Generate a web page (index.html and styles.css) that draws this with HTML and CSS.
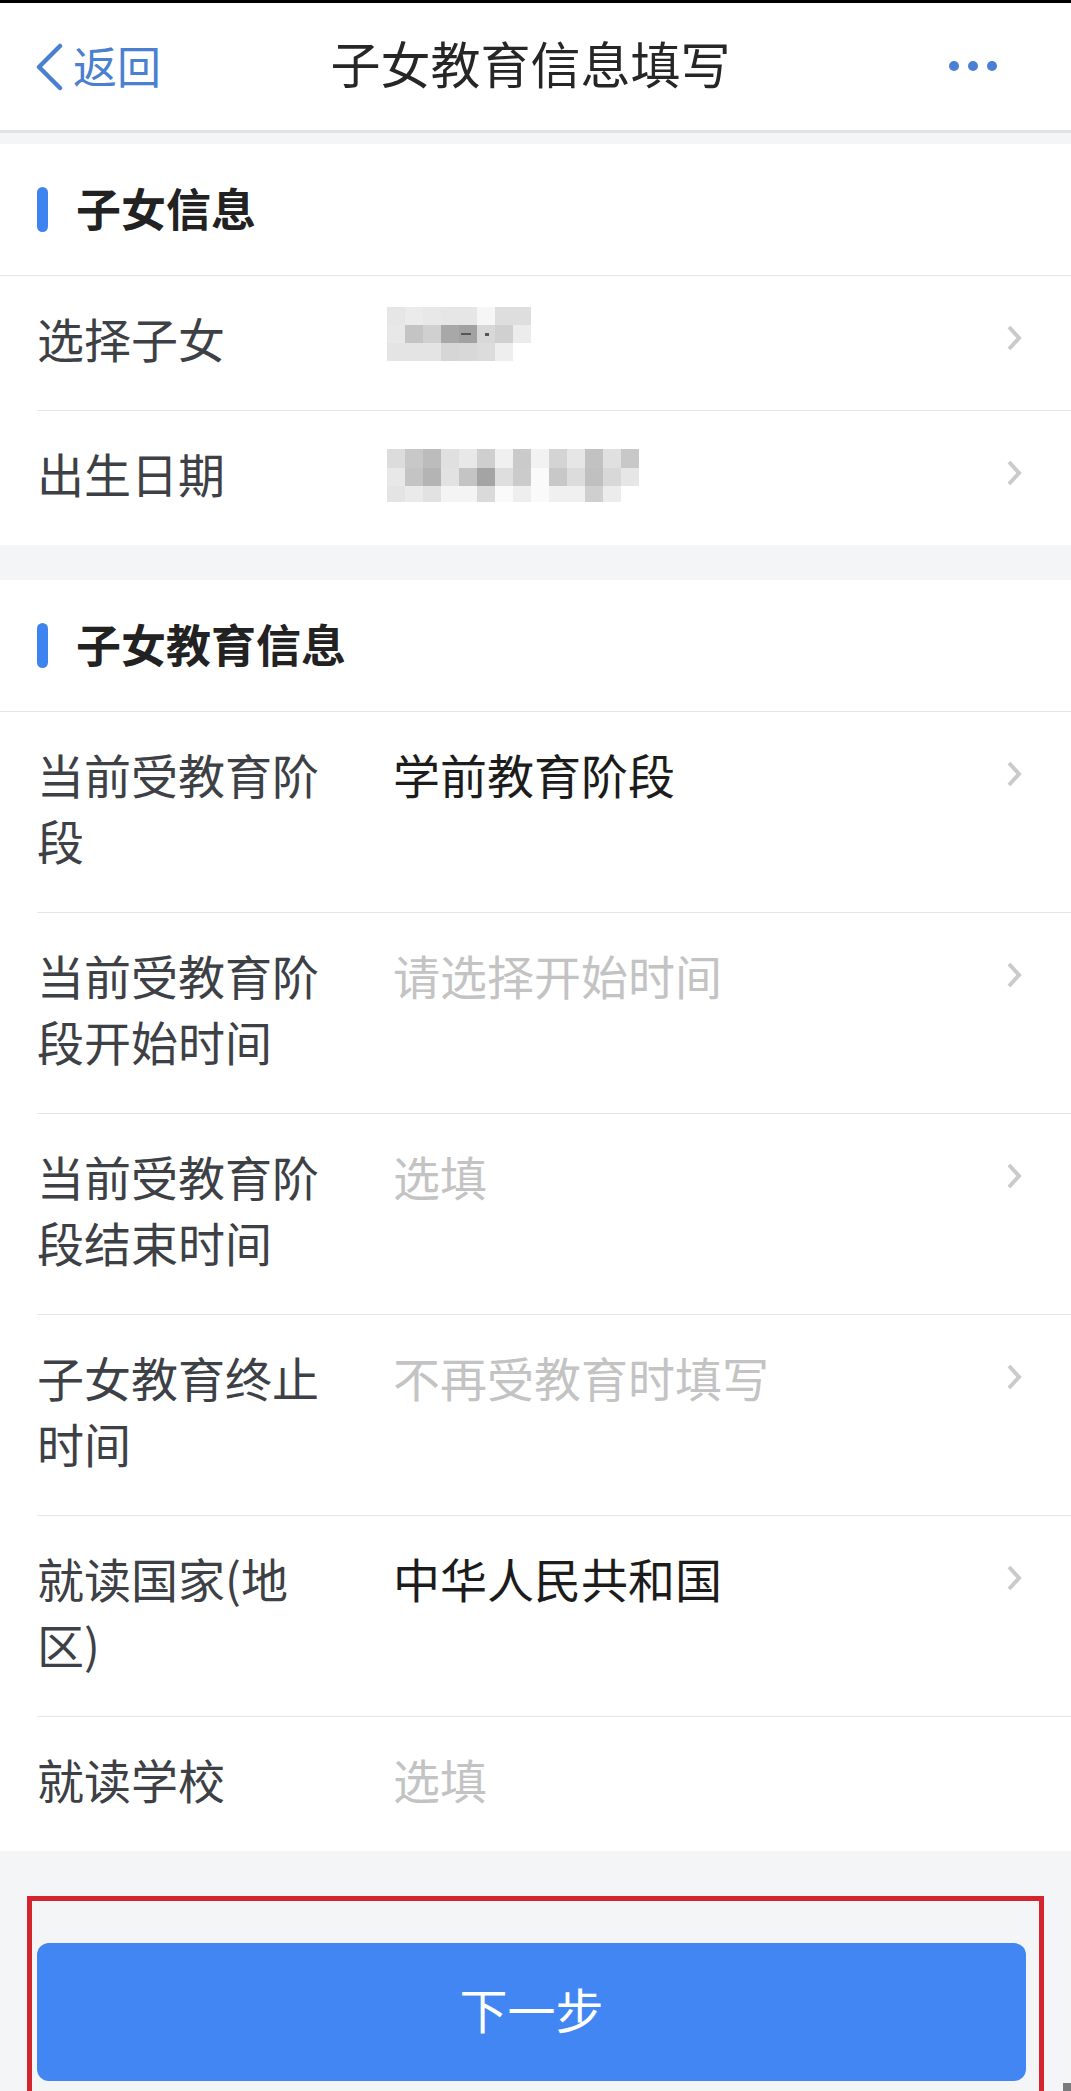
FILE: index.html
```html
<!DOCTYPE html>
<html lang="zh-CN">
<head>
<meta charset="utf-8">
<title>子女教育信息填写</title>
<link rel="stylesheet" href="styles.css">
</head>
<body>
<div class="page">
  <div class="status"></div>
  <header class="nav">
    <div class="back">
      <svg class="back-icon" width="30" height="48" viewBox="0 0 30 48"><polyline points="26,3 5,24 26,45" fill="none" stroke="#4a80cf" stroke-width="4.5" stroke-linecap="round" stroke-linejoin="round"/></svg>
      <span>返回</span>
    </div>
    <div class="title">子女教育信息填写</div>
    <div class="more"><span class="dot"></span><span class="dot"></span><span class="dot"></span></div>
  </header>

  <section class="card">
    <div class="card-head"><span class="mark"></span><span class="head-text">子女信息</span></div>
    <div class="row">
      <div class="label">选择子女</div>
      <div class="value">
        <svg class="mosaic" width="150" height="66" viewBox="0 0 150 66">
          <g transform="translate(0,2)">
          <rect x="0" y="0" width="18" height="18" fill="#e6e6e6"/><rect x="18" y="0" width="18" height="18" fill="#ebebeb"/><rect x="36" y="0" width="18" height="18" fill="#e8e8e8"/><rect x="54" y="0" width="36" height="18" fill="#e6e6e6"/><rect x="90" y="0" width="18" height="18" fill="#f6f6f6"/><rect x="108" y="0" width="36" height="18" fill="#dedede"/>
          <rect x="0" y="18" width="18" height="18" fill="#e8e8e8"/><rect x="18" y="18" width="18" height="18" fill="#c4c4c4"/><rect x="36" y="18" width="18" height="18" fill="#d0d0d0"/><rect x="54" y="18" width="18" height="18" fill="#a8a8a8"/><rect x="72" y="18" width="18" height="18" fill="#a2a2a2"/><rect x="90" y="18" width="18" height="18" fill="#d8d8d8"/><rect x="108" y="18" width="18" height="18" fill="#d0d0d0"/><rect x="126" y="18" width="18" height="18" fill="#ececec"/>
          <rect x="0" y="36" width="54" height="18" fill="#e4e4e4"/><rect x="54" y="36" width="18" height="18" fill="#d6d6d6"/><rect x="72" y="36" width="18" height="18" fill="#d8d8d8"/><rect x="90" y="36" width="18" height="18" fill="#dcdcdc"/><rect x="108" y="36" width="18" height="18" fill="#eeeeee"/>
          <rect x="74" y="26" width="10" height="2" fill="#555"/><rect x="98" y="26" width="4" height="3" fill="#555"/>
          </g>
        </svg>
      </div>
      <div class="arrow"><svg width="18" height="28" viewBox="0 0 18 28"><polyline points="4,3 14,14 4,25" fill="none" stroke="#cacaca" stroke-width="4"/></svg></div>
    </div>
    <div class="row">
      <div class="label">出生日期</div>
      <div class="value">
        <svg class="mosaic" width="260" height="66" viewBox="0 0 260 66">
          <g transform="translate(0,9)">
          <rect x="0" y="0" width="18" height="19" fill="#dcdcdc"/><rect x="18" y="0" width="18" height="19" fill="#c8c8c8"/><rect x="36" y="0" width="18" height="19" fill="#bcbcbc"/><rect x="54" y="0" width="18" height="19" fill="#e0e0e0"/><rect x="72" y="0" width="18" height="19" fill="#e8e8e8"/><rect x="90" y="0" width="18" height="19" fill="#cfcfcf"/><rect x="108" y="0" width="18" height="19" fill="#f0f0f0"/><rect x="126" y="0" width="18" height="19" fill="#cacaca"/><rect x="144" y="0" width="18" height="19" fill="#f2f2f2"/><rect x="162" y="0" width="18" height="19" fill="#d4d4d4"/><rect x="180" y="0" width="18" height="19" fill="#e6e6e6"/><rect x="198" y="0" width="18" height="19" fill="#c2c2c2"/><rect x="216" y="0" width="18" height="19" fill="#e0e0e0"/><rect x="234" y="0" width="18" height="19" fill="#c8c8c8"/>
          <rect x="0" y="19" width="18" height="18" fill="#e8e8e8"/><rect x="18" y="19" width="18" height="18" fill="#c4c4c4"/><rect x="36" y="19" width="18" height="18" fill="#b4b4b4"/><rect x="54" y="19" width="18" height="18" fill="#e2e2e2"/><rect x="72" y="19" width="18" height="18" fill="#c4c4c4"/><rect x="90" y="19" width="18" height="18" fill="#a4a4a4"/><rect x="108" y="19" width="18" height="18" fill="#dedede"/><rect x="126" y="19" width="18" height="18" fill="#cbcbcb"/><rect x="144" y="19" width="18" height="18" fill="#fafafa"/><rect x="162" y="19" width="18" height="18" fill="#c8c8c8"/><rect x="180" y="19" width="18" height="18" fill="#dcdcdc"/><rect x="198" y="19" width="18" height="18" fill="#c0c0c0"/><rect x="216" y="19" width="18" height="18" fill="#d8d8d8"/><rect x="234" y="19" width="18" height="18" fill="#e6e6e6"/>
          <rect x="0" y="37" width="18" height="16" fill="#e4e4e4"/><rect x="18" y="37" width="18" height="16" fill="#eaeaea"/><rect x="36" y="37" width="18" height="16" fill="#e2e2e2"/><rect x="54" y="37" width="36" height="16" fill="#f4f4f4"/><rect x="90" y="37" width="18" height="16" fill="#dadada"/><rect x="108" y="37" width="18" height="16" fill="#fafafa"/><rect x="126" y="37" width="18" height="16" fill="#eeeeee"/><rect x="144" y="37" width="18" height="16" fill="#fafafa"/><rect x="162" y="37" width="36" height="16" fill="#f0f0f0"/><rect x="198" y="37" width="18" height="16" fill="#cfcfcf"/><rect x="216" y="37" width="18" height="16" fill="#ececec"/>
          </g>
        </svg>
      </div>
      <div class="arrow"><svg width="18" height="28" viewBox="0 0 18 28"><polyline points="4,3 14,14 4,25" fill="none" stroke="#cacaca" stroke-width="4"/></svg></div>
    </div>
  </section>

  <section class="card">
    <div class="card-head"><span class="mark"></span><span class="head-text">子女教育信息</span></div>
    <div class="row">
      <div class="label">当前受教育阶段</div>
      <div class="value">学前教育阶段</div>
      <div class="arrow"><svg width="18" height="28" viewBox="0 0 18 28"><polyline points="4,3 14,14 4,25" fill="none" stroke="#cacaca" stroke-width="4"/></svg></div>
    </div>
    <div class="row">
      <div class="label">当前受教育阶段开始时间</div>
      <div class="value placeholder">请选择开始时间</div>
      <div class="arrow"><svg width="18" height="28" viewBox="0 0 18 28"><polyline points="4,3 14,14 4,25" fill="none" stroke="#cacaca" stroke-width="4"/></svg></div>
    </div>
    <div class="row">
      <div class="label">当前受教育阶段结束时间</div>
      <div class="value placeholder">选填</div>
      <div class="arrow"><svg width="18" height="28" viewBox="0 0 18 28"><polyline points="4,3 14,14 4,25" fill="none" stroke="#cacaca" stroke-width="4"/></svg></div>
    </div>
    <div class="row">
      <div class="label">子女教育终止时间</div>
      <div class="value placeholder">不再受教育时填写</div>
      <div class="arrow"><svg width="18" height="28" viewBox="0 0 18 28"><polyline points="4,3 14,14 4,25" fill="none" stroke="#cacaca" stroke-width="4"/></svg></div>
    </div>
    <div class="row">
      <div class="label">就读国家(地区)</div>
      <div class="value">中华人民共和国</div>
      <div class="arrow"><svg width="18" height="28" viewBox="0 0 18 28"><polyline points="4,3 14,14 4,25" fill="none" stroke="#cacaca" stroke-width="4"/></svg></div>
    </div>
    <div class="row">
      <div class="label">就读学校</div>
      <div class="value placeholder">选填</div>
    </div>
  </section>

  <div class="footer">
    <div class="outline">
      <div class="btn">下一步</div>
    </div>
  </div>
  <div class="scroll-thumb"></div>
</div>
</body>
</html>
```

FILE: styles.css
```css
html, body {
  margin: 0;
  padding: 0;
}
body {
  background: #f4f5f7;
  font-family: "Noto Sans CJK SC", "Noto Sans", sans-serif;
}
.page {
  position: relative;
  height: 2091px;
  overflow: hidden;
}
.status {
  height: 3px;
  background: #000;
}
.nav {
  height: 127px;
  background: #fff;
  display: grid;
  grid-template-columns: 1fr auto 1fr;
  align-items: center;
  border-bottom: 3px solid #e2e3e5;
  margin-bottom: 11px;
}
.back {
  display: flex;
  align-items: center;
  padding-left: 34px;
  color: #4a80cf;
  font-size: 44px;
  gap: 9px;
}
.back span {
  padding-bottom: 4px;
}
.back-icon {
  display: block;
}
.title {
  font-size: 50px;
  color: #262626;
  margin-right: 10px;
  padding-bottom: 10px;
}
.more {
  justify-self: end;
  display: flex;
  gap: 9px;
  padding-right: 74px;
  padding-bottom: 2px;
}
.dot {
  width: 10px;
  height: 10px;
  border-radius: 50%;
  background: #4a7fd4;
}
.card {
  background: #fff;
}
.card + .card {
  margin-top: 35px;
}
.card-head {
  height: 131px;
  border-bottom: 1px solid #e6e6e6;
  display: flex;
  align-items: center;
  padding-left: 37px;
}
.mark {
  width: 11px;
  height: 45px;
  border-radius: 6px;
  background: #3d84f0;
  margin-right: 28px;
}
.head-text {
  font-size: 45px;
  font-weight: 700;
  color: #222;
  padding-bottom: 5px;
}
.row {
  margin-left: 37px;
  display: flex;
  align-items: flex-start;
  padding: 29px 48px 39px 0;
  border-bottom: 1px solid #e6e6e6;
  line-height: 66px;
  font-size: 47px;
}
.row:last-child {
  border-bottom: none;
}
.label {
  width: 292px;
  flex: none;
  color: #3d4045;
  margin-right: 64px;
}
.value {
  flex: 1;
  color: #1c1c1c;
  min-height: 66px;
}
.value.placeholder {
  color: #c3c3c3;
}
.mosaic {
  display: block;
  margin-left: -6px;
}
.arrow {
  flex: none;
  width: 18px;
  height: 66px;
  display: flex;
  align-items: center;
}
.arrow svg {
  display: block;
}
.footer {
  padding-top: 45px;
}
.outline {
  margin-left: 27px;
  width: 1017px;
  box-sizing: border-box;
  border: 5px solid #d4252f;
  border-bottom: none;
  padding: 42px 13px 30px 5px;
}
.btn {
  height: 138px;
  box-sizing: border-box;
  padding-bottom: 8px;
  border-radius: 12px;
  background: #4286f4;
  color: #fff;
  font-size: 48px;
  display: flex;
  align-items: center;
  justify-content: center;
}
.scroll-thumb {
  position: absolute;
  right: 0;
  bottom: 0;
  width: 8px;
  height: 8px;
  background: #7a7a7a;
}
```
